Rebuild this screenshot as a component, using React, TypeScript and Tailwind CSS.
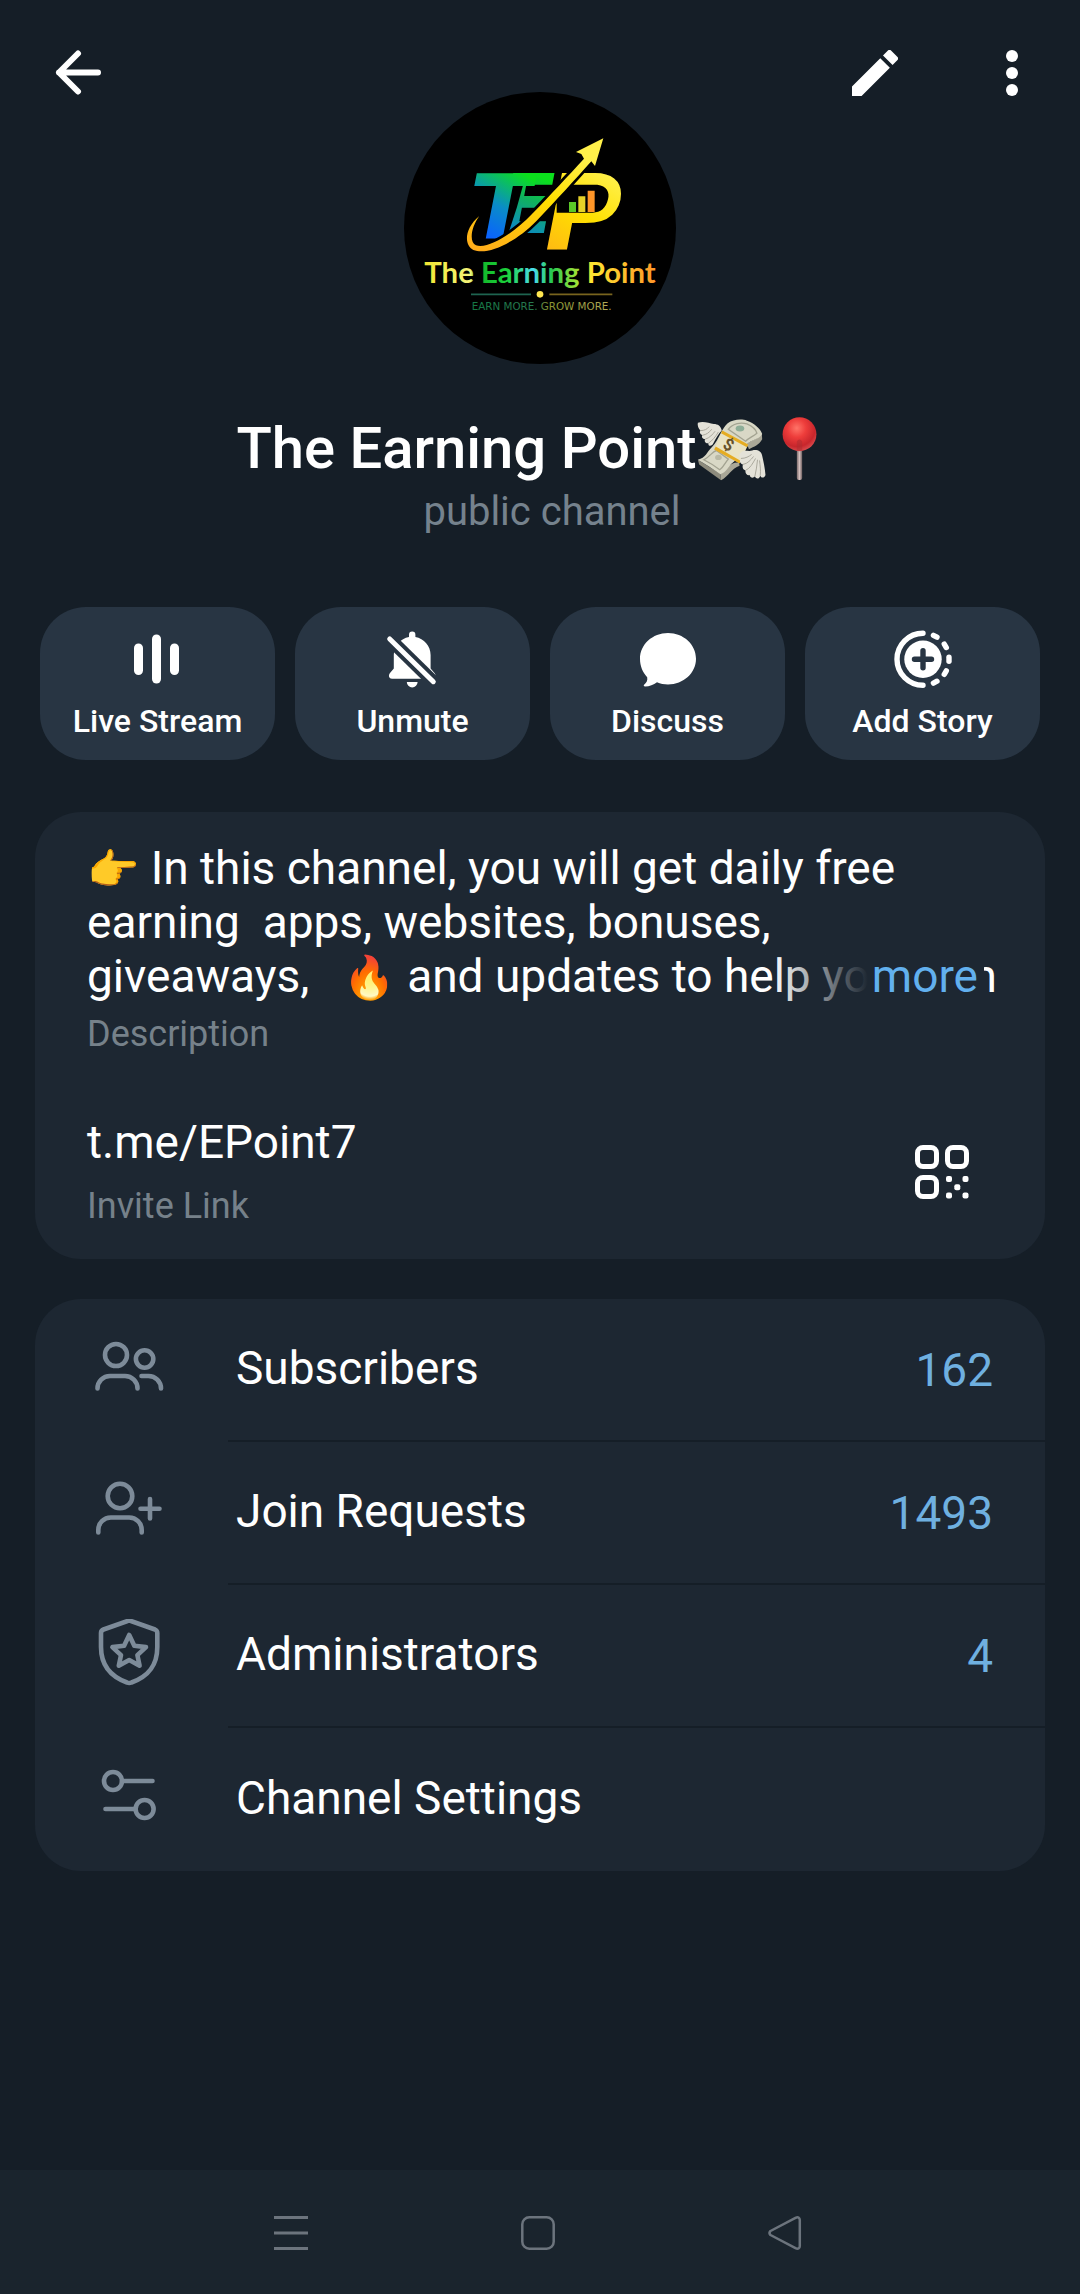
import { ReactNode } from "react";

interface ActionButtonProps {
  icon: ReactNode;
  label: string;
}

interface SettingsRowProps {
  icon: ReactNode;
  label: string;
  value?: string;
  last?: boolean;
}

function BackIcon() {
  return (
    <svg viewBox="0 0 46 46" className="size-[46px]" fill="none" stroke="currentColor" strokeWidth="6" strokeLinecap="round" strokeLinejoin="round" aria-hidden="true">
      <path d="M43 22.5H4M23 3.5L4 22.5L23 41.5" />
    </svg>
  );
}

function EditIcon() {
  return (
    <svg viewBox="3 3 18 18" className="size-[46px]" fill="currentColor" aria-hidden="true">
      <path d="M3 17.25V21h3.75L17.81 9.94l-3.75-3.75L3 17.25zM20.71 7.04a1 1 0 0 0 0-1.41l-2.34-2.34a1 1 0 0 0-1.41 0l-1.83 1.83 3.75 3.75 1.83-1.83z" />
    </svg>
  );
}

function MoreIcon() {
  return (
    <svg viewBox="0 0 12 46" className="h-[46px] w-3" fill="currentColor" aria-hidden="true">
      <circle cx="6" cy="6" r="6" />
      <circle cx="6" cy="23" r="6" />
      <circle cx="6" cy="40" r="6" />
    </svg>
  );
}

function LiveIcon() {
  return (
    <svg viewBox="0 0 56 56" className="size-14" fill="currentColor" aria-hidden="true">
      <rect x="4" y="12.5" width="9" height="31.5" rx="4.5" />
      <rect x="22" y="3.5" width="9" height="49" rx="4.5" />
      <rect x="40" y="12.5" width="9" height="31.5" rx="4.5" />
    </svg>
  );
}

function UnmuteIcon() {
  return (
    <svg viewBox="0 0 56 56" className="size-14 overflow-visible" aria-hidden="true">
      <mask id="bell-slash" maskUnits="userSpaceOnUse" x="0" y="0" width="56" height="58">
        <rect width="56" height="58" fill="white" />
        <path d="M0 3.4L56 58.3" stroke="black" strokeWidth="13" />
      </mask>
      <g mask="url(#bell-slash)" fill="currentColor">
        <path d="M24 6V3.8a3.2 3.2 0 0 1 6.4 0V6C39 7.5 45.6 15 45.6 24V37.5L49.5 42C51.5 44.5 50.5 47.7 47.5 47.7H7C4 47.7 3 44.5 5 42L8.8 37.5V24C8.8 15 15.5 7.5 24 6Z" />
        <path d="M21.8 51H32.6A5.4 5.4 0 0 1 21.8 51Z" />
      </g>
      <path d="M4.7 8L48.3 50.7" stroke="currentColor" strokeWidth="5" strokeLinecap="round" />
    </svg>
  );
}

function DiscussIcon() {
  return (
    <svg viewBox="0 0 56 56" className="size-14" fill="currentColor" aria-hidden="true">
      <path d="M28 2C43.5 2 56 13.5 56 27.8S43.5 53.5 28 53.5C24 53.5 20.4 52.8 17 51.3C13.5 53.8 9.5 55.4 5.2 55.6C3.7 55.6 3.3 54.6 4.3 53.6C6.5 51.5 7.8 49.5 7.2 46.2C2.7 41.5 0 35 0 27.8C0 13.5 12.5 2 28 2Z" />
    </svg>
  );
}

function AddStoryIcon() {
  const dashes = [-62, -31, 0, 31, 62];
  return (
    <svg viewBox="0 0 56 56" className="size-14 overflow-visible" fill="none" stroke="currentColor" strokeWidth="5.4" strokeLinecap="round" aria-hidden="true">
      <path d="M28 2.2A26 26 0 0 0 28 54.2" />
      {dashes.map((angle) => (
        <path key={angle} d="M54 26.2V30.2" transform={`rotate(${angle} 28 28.2)`} />
      ))}
      <circle cx="28" cy="28.2" r="18.7" fill="currentColor" stroke="none" />
      <path d="M19.5 28.2H36.5M28 19.7V36.7" className="stroke-[#283543]" />
    </svg>
  );
}

function QrIcon() {
  return (
    <svg viewBox="0 0 54 54" className="size-[54px]" fill="none" stroke="currentColor" strokeWidth="5" aria-hidden="true">
      <rect x="2.5" y="2.5" width="19" height="19" rx="5.5" />
      <rect x="32.5" y="2.5" width="19" height="19" rx="5.5" />
      <rect x="2.5" y="32.5" width="19" height="19" rx="5.5" />
      <g fill="currentColor" stroke="none">
        <rect x="31" y="31" width="6" height="6" rx="2" />
        <rect x="47.5" y="31" width="6" height="6" rx="2" />
        <rect x="39.3" y="39.2" width="6" height="6" rx="2" />
        <rect x="31" y="47.5" width="6" height="6" rx="2" />
        <rect x="47.5" y="47.5" width="6" height="6" rx="2" />
      </g>
    </svg>
  );
}

function RowIcon({ children }: { children: ReactNode }) {
  return (
    <svg viewBox="0 0 72 72" className="size-[72px] shrink-0 text-[#7d8b99]" fill="none" stroke="currentColor" strokeWidth="4.6" strokeLinecap="round" strokeLinejoin="round" aria-hidden="true">
      {children}
    </svg>
  );
}

function MoneyWings() {
  return (
    <svg viewBox="112 76 210 196" className="h-[65px] w-[70px]" role="img" aria-label="💸">
      <path d="M114 208L182 250L184 270L118 222Z" fill="#8d8b7d" />
      <path d="M182 250C200 238 208 214 238 216L240 226C216 234 206 258 184 270Z" fill="#a9a797" />
      <path d="M262 160C276 148 294 146 307 128L308 146C298 164 284 168 268 176Z" fill="#a9a797" />
      <path d="M114 208C138 202 140 186 158 168C176 150 188 110 204 98C220 86 246 84 262 90C284 98 302 112 308 130C298 148 276 146 260 162C244 180 236 206 218 218C206 228 200 246 182 252C160 236 138 222 114 208Z" fill="#d9d8c6" />
      <path d="M132 208C150 200 156 184 170 180L206 206C196 216 194 228 180 238C164 226 148 216 132 208Z" fill="none" stroke="#a3a391" strokeWidth="4" />
      <path d="M206 116C220 98 244 94 262 100C276 106 288 114 292 128C280 138 268 142 258 152Z" fill="none" stroke="#a3a391" strokeWidth="4" />
      <ellipse cx="176" cy="201" rx="10" ry="8" fill="#b9b9a6" />
      <ellipse cx="241" cy="114" rx="13" ry="9" fill="#8fae98" />
      <path d="M188 120L266 162L240 218L164 176Z" fill="#e9e3c4" />
      <path d="M188 120L266 162L262 170L184 128Z" fill="#e5ac22" />
      <path d="M168 168L244 212L240 219L163 177Z" fill="#e5ac22" />
      <text x="206" y="180" textAnchor="middle" fontSize="50" fill="#66512a" transform="rotate(28 206 164)" className="font-['Roboto'] font-bold">$</text>
      <path d="M114 96C132 90 148 98 162 100C174 100 184 106 186 120C176 130 168 144 160 160C154 170 144 166 146 158C138 160 132 152 136 146C128 146 124 138 128 134C120 132 118 124 122 120C116 114 112 104 114 96Z" fill="#e4e2d8" />
      <path d="M128 134C140 132 148 126 156 116M136 146C150 142 158 132 166 122M146 158C158 150 168 138 176 124M122 120C134 120 142 116 148 108" fill="none" stroke="#aaa89c" strokeWidth="3" />
      <path d="M244 186C254 176 266 184 278 180C292 176 306 182 308 196C312 214 316 232 318 254C314 264 306 264 302 256C300 266 290 268 286 258C280 266 272 262 270 254C262 256 256 248 258 240C248 238 248 228 250 222C240 220 238 210 244 204C236 200 238 190 244 186Z" fill="#e4e2d8" />
      <path d="M244 204C258 204 268 198 276 192M250 222C264 220 274 208 282 198M258 240C272 234 280 218 288 204M286 258C290 240 292 226 294 208M302 256C304 240 302 226 300 210" fill="none" stroke="#aaa89c" strokeWidth="3" />
    </svg>
  );
}

function RoundPin() {
  return (
    <svg viewBox="322 76 196 196" className="size-[65px]" role="img" aria-label="📍">
      <defs>
        <radialGradient id="pin-head" cx="0.42" cy="0.32" r="0.68">
          <stop offset="0" stopColor="#ff7468" />
          <stop offset="0.4" stopColor="#ee3d3b" />
          <stop offset="0.8" stopColor="#c8262c" />
          <stop offset="1" stopColor="#d8474a" />
        </radialGradient>
        <linearGradient id="pin-needle">
          <stop offset="0" stopColor="#7d6c6c" />
          <stop offset="0.5" stopColor="#d3bfbd" />
          <stop offset="1" stopColor="#6f6060" />
        </linearGradient>
      </defs>
      <rect x="412" y="170" width="16" height="99" rx="6" fill="url(#pin-needle)" />
      <circle cx="420" cy="131" r="51" fill="url(#pin-head)" />
      <path d="M412 181V152Q420 142 428 152V181Z" fill="#a92c30" opacity="0.5" />
    </svg>
  );
}

function ChannelLogo() {
  return (
    <svg viewBox="42 36 816 816" className="-mt-1 size-[272px] rounded-full bg-black" role="img" aria-label="The Earning Point logo">
      <defs>
        <linearGradient id="logo-t" gradientUnits="userSpaceOnUse" x1="290" y1="470" x2="400" y2="280">
          <stop offset="0" stopColor="#0a62ff" />
          <stop offset="0.45" stopColor="#0a8cc8" />
          <stop offset="1" stopColor="#0be01c" />
        </linearGradient>
        <linearGradient id="logo-e" gradientUnits="userSpaceOnUse" x1="370" y1="470" x2="450" y2="290">
          <stop offset="0" stopColor="#0a80d8" />
          <stop offset="0.6" stopColor="#10b060" />
          <stop offset="1" stopColor="#0be01c" />
        </linearGradient>
        <linearGradient id="logo-p" x1="0" y1="1" x2="0.4" y2="0">
          <stop offset="0" stopColor="#ffa81c" />
          <stop offset="0.6" stopColor="#ffe000" />
          <stop offset="1" stopColor="#fff04a" />
        </linearGradient>
        <linearGradient id="logo-name" gradientUnits="userSpaceOnUse" x1="103" y1="0" x2="797" y2="0">
          <stop offset="0" stopColor="#f2e632" />
          <stop offset="0.2" stopColor="#f4f47a" />
          <stop offset="0.23" stopColor="#12b428" />
          <stop offset="0.36" stopColor="#1cd23c" />
          <stop offset="0.47" stopColor="#4adcf0" />
          <stop offset="0.55" stopColor="#28c850" />
          <stop offset="0.68" stopColor="#b4e632" />
          <stop offset="0.72" stopColor="#ffe632" />
          <stop offset="1" stopColor="#ff9628" />
        </linearGradient>
        <linearGradient id="logo-tag" gradientUnits="userSpaceOnUse" x1="243" y1="0" x2="667" y2="0">
          <stop offset="0" stopColor="#147846" />
          <stop offset="0.45" stopColor="#287850" />
          <stop offset="0.55" stopColor="#8c9632" />
          <stop offset="1" stopColor="#b4aa5a" />
        </linearGradient>
      </defs>
      <text x="330" y="458" fontSize="244" fill="url(#logo-e)" className="font-['DejaVu_Sans'] font-bold italic">E</text>
      <path d="M330 313H400L380 384L352 470H270Z" fill="black" />
      <text x="240" y="473" fontSize="269" fill="url(#logo-t)" className="font-['DejaVu_Sans'] font-bold italic">T</text>
      <text x="464" y="510" fontSize="318" fill="url(#logo-p)" stroke="black" strokeWidth="14" paintOrder="stroke" className="font-['DejaVu_Sans'] font-bold italic">P</text>
      <path d="M500 314H622C650 318 660 336 654 358C648 384 632 398 608 398H500Z" fill="black" />
      <path d="M537 366H558V396H537Z" fill="#5ac828" />
      <path d="M565 349H586V396H565Z" fill="#e6d228" />
      <path d="M593 332H614V396H593Z" fill="#ff9628" />
      <path d="M268 408C222 446 222 496 250 510C296 528 380 484 440 422C502 358 554 300 604 244L615 258L640 175L558 216L574 222L582 236C534 288 484 342 426 402C370 460 296 508 258 496C236 486 244 440 268 408Z" fill="black" stroke="black" strokeWidth="16" />
      <path d="M268 408C222 446 222 496 250 510C296 528 380 484 440 422C502 358 554 300 604 244L615 258L640 175L558 216L574 222L582 236C534 288 484 342 426 402C370 460 296 508 258 496C236 486 244 440 268 408Z" fill="url(#logo-p)" />
      <text x="450" y="610" textAnchor="middle" fontSize="88" fill="url(#logo-name)" className="font-['Lato'] font-bold">The Earning Point</text>
      <path d="M243 643H423" stroke="#1e6450" strokeWidth="5" />
      <path d="M478 643H667" stroke="#78641e" strokeWidth="5" />
      <circle cx="450" cy="643" r="10" fill="#ffe650" />
      <text x="455" y="690" textAnchor="middle" fontSize="31" fill="url(#logo-tag)" className="font-['DejaVu_Sans']">EARN MORE. GROW MORE.</text>
    </svg>
  );
}

function ActionButton({ icon, label }: ActionButtonProps) {
  return (
    <button type="button" className="flex min-w-0 flex-col items-center gap-[14px] rounded-[46px] bg-[#283543] pt-6 pb-[19px]">
      {icon}
      <span className="text-[32px] leading-10 font-medium">{label}</span>
    </button>
  );
}

function SettingsRow({ icon, label, value, last }: SettingsRowProps) {
  return (
    <button type="button" className="flex h-[143px] w-full items-stretch text-left text-[46px] leading-[54px]">
      <span className="flex w-[193px] shrink-0 items-center pb-1 pl-[58px]">
        <RowIcon>{icon}</RowIcon>
      </span>
      <span className={`flex flex-1 items-center justify-between pr-[52px] pl-2 ${last ? "" : "border-b-2 border-[#151e27]"}`}>
        <span className="pb-1">{label}</span>
        {value && <span className="text-[#6fb0e0]">{value}</span>}
      </span>
    </button>
  );
}

export default function App() {
  return (
    <div className="flex min-h-screen flex-col bg-[#151e27] font-['Roboto','Noto_Color_Emoji',sans-serif] text-white">
      <header className="flex items-center pt-[50px] pr-[62px] pl-[55px]">
        <button type="button" aria-label="Back"><BackIcon /></button>
        <button type="button" aria-label="Edit" className="ml-auto"><EditIcon /></button>
        <button type="button" aria-label="More options" className="ml-[108px]"><MoreIcon /></button>
      </header>

      <main className="flex-1">
        <section className="flex flex-col items-center">
          <ChannelLogo />
          <h1 className="mt-[52px] flex pr-3 text-[58px] leading-[64px] font-medium whitespace-nowrap">
            The Earning Point
            <MoneyWings />
            <RoundPin />
          </h1>
          <p className="mt-[7px] pl-6 text-[40px] leading-[48px] text-[#75828d]">public channel</p>
        </section>

        <section className="mt-[71px] grid grid-cols-4 gap-5 px-10">
          <ActionButton icon={<LiveIcon />} label="Live Stream" />
          <ActionButton icon={<UnmuteIcon />} label="Unmute" />
          <ActionButton icon={<DiscussIcon />} label="Discuss" />
          <ActionButton icon={<AddStoryIcon />} label="Add Story" />
        </section>

        <section className="mx-[35px] mt-[52px] rounded-[46px] bg-[#1d2732] px-[52px] pt-[29px] pb-[31px]">
          <p className="-mr-5 text-[46px] leading-[54px] whitespace-pre-wrap">
            <span className="text-[42px] leading-none">👉</span>
            {" In this channel, you will get daily free earning  apps, websites, bonuses,\ngiveaways,   "}
            <span className="text-[42px] leading-none">🔥</span>
            {" and updates to "}
            <span className="relative whitespace-nowrap">
              help you earn
              <span className="absolute top-0 right-[13px] flex h-[54px]">
                <span className="w-24 bg-gradient-to-r from-[#1d2732]/0 to-[#1d2732]" />
                <button type="button" className="bg-[#1d2732] pr-[6px] pl-1 text-[#62b0ee]">more</button>
              </span>
            </span>
          </p>
          <p className="mt-[9px] text-[36px] leading-[44px] text-[#76818a]">Description</p>
          <div className="mt-[59px] flex items-center justify-between pr-6">
            <div>
              <a href="https://t.me/EPoint7" className="block text-[46px] leading-[54px]">t.me/EPoint7</a>
              <p className="mt-[15px] text-[36px] leading-[44px] text-[#76818a]">Invite Link</p>
            </div>
            <button type="button" aria-label="Show QR code"><QrIcon /></button>
          </div>
        </section>

        <section className="mx-[35px] mt-10 overflow-hidden rounded-[46px] bg-[#1d2732]">
          <SettingsRow
            label="Subscribers"
            value="162"
            icon={
              <>
                <circle cx="23" cy="22" r="11" />
                <circle cx="51.6" cy="26" r="8.7" />
                <path d="M4.5 55.5A12.5 12.5 0 0 1 17 43H32A12.5 12.5 0 0 1 44.5 55.5" />
                <path d="M48.5 43H55.5A12.5 12.5 0 0 1 68 55.5" />
              </>
            }
          />
          <SettingsRow
            label="Join Requests"
            value="1493"
            icon={
              <>
                <circle cx="27" cy="20" r="12.3" />
                <path d="M5.3 56.5V54A12.5 12.5 0 0 1 17.8 41.5H36.2A12.5 12.5 0 0 1 48.7 54V56.5" />
                <path d="M47.5 32.7H66.5M57 23V42.5" />
              </>
            }
          />
          <SettingsRow
            label="Administrators"
            value="4"
            icon={
              <>
                <path d="M34.5 2Q36.3 1.2 38 2L62 10.5Q64.3 11.5 64.3 14V28C64.3 47 55 57.5 38.5 63.5Q36.3 64.5 34 63.5C17.5 57.5 8 47 8 28V14Q8 11.5 10.5 10.5Z" />
                <path d="M36.2 16L41.3 26.7L53 28.1L44.4 36.1L46.6 46.7L36.2 41L25.8 46.7L28 36.1L19.4 28.1L31.1 26.7Z" />
              </>
            }
          />
          <SettingsRow
            label="Channel Settings"
            last
            icon={
              <>
                <circle cx="20" cy="19" r="9" />
                <path d="M29 19H59.5" />
                <circle cx="51.6" cy="47" r="9" />
                <path d="M12.5 47H42.6" />
              </>
            }
          />
        </section>
      </main>

      <nav className="flex h-[124px] items-center justify-center gap-[213px] bg-[#1a242d] pt-[2px] pr-1 text-[#6c747d]">
        <button type="button" aria-label="Recent apps">
          <svg viewBox="0 0 34 34" className="size-[34px]" fill="none" stroke="currentColor" strokeWidth="3" aria-hidden="true">
            <path d="M0 1.5H34M0 17H34M0 32.5H34" />
          </svg>
        </button>
        <button type="button" aria-label="Home">
          <svg viewBox="0 0 34 34" className="size-[34px]" fill="none" stroke="currentColor" strokeWidth="2.5" aria-hidden="true">
            <rect x="1.3" y="1.3" width="31.4" height="31.4" rx="7" />
          </svg>
        </button>
        <button type="button" aria-label="Back navigation">
          <svg viewBox="0 0 34 34" className="size-[34px]" fill="none" stroke="currentColor" strokeWidth="2.5" strokeLinejoin="round" aria-hidden="true">
            <path d="M2.5 15L27.5 1.8C30 0.6 31.8 1.5 31.8 4V30C31.8 32.5 30 33.4 27.5 32.2L2.5 19Q0.5 17 2.5 15Z" />
          </svg>
        </button>
      </nav>
    </div>
  );
}
